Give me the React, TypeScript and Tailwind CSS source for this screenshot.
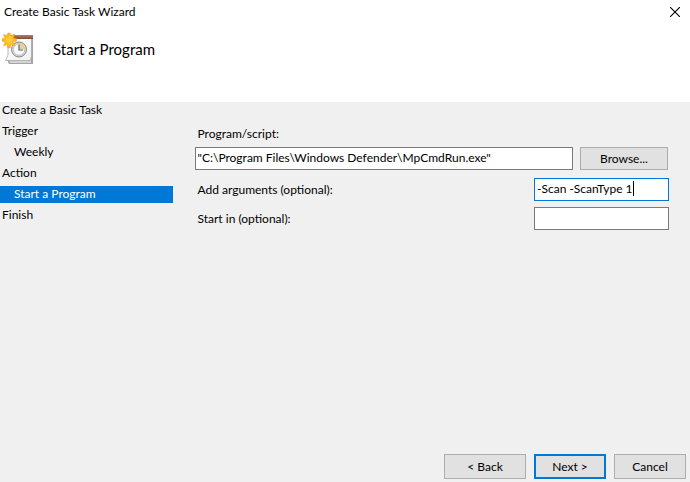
import React, { useState } from 'react'
import { clsx } from 'clsx'

interface IStep {
    id: string
    title: string
    nested?: boolean
}

interface IWizardButtonProps {
    text: string
    className?: string
    primary?: boolean
}

interface ITextFieldProps {
    id: string
    value: string
    onChange: (value: string) => void
    active?: boolean
}

const steps: IStep[] = [
    { id: 'create', title: 'Create a Basic Task' },
    { id: 'trigger', title: 'Trigger' },
    { id: 'weekly', title: 'Weekly', nested: true },
    { id: 'action', title: 'Action' },
    { id: 'start-program', title: 'Start a Program', nested: true },
    { id: 'finish', title: 'Finish' },
]

const App = () => {
    const [program, setProgram] = useState<string>('"C:\\Program Files\\Windows Defender\\MpCmdRun.exe"')
    const [programArguments, setProgramArguments] = useState<string>('-Scan -ScanType 1')
    const [startIn, setStartIn] = useState<string>('')
    const [edited, setEdited] = useState<boolean>(false)

    return (
        <div className="flex min-h-screen flex-col bg-[#f0f0f0] font-['Segoe_UI',Lato,sans-serif] text-xs text-black">
            {/* Title bar and page heading */}
            <header className="h-[102px] bg-white">
                <div className="flex h-6 items-center justify-between pl-1 pr-[10px]">
                    <span>Create Basic Task Wizard</span>
                    <button type="button" aria-label="Close">
                        <CloseIcon />
                    </button>
                </div>
                <div className="flex items-center gap-[18px] pl-[2px] pt-2">
                    <TaskIcon />
                    <h1 className="text-[15px] leading-5">Start a Program</h1>
                </div>
            </header>

            <main className="flex flex-1">
                {/* Steps */}
                <nav className="w-1/4" aria-label="Steps">
                    <ul className="flex flex-col gap-1">
                        {steps.map((step) => (
                            <li
                                key={step.id}
                                aria-current={step.id === 'start-program' ? 'step' : undefined}
                                className={clsx(
                                    'h-[17px] whitespace-nowrap leading-4',
                                    step.nested ? 'pl-[14px]' : 'pl-[2px]',
                                    step.id === 'start-program' && 'bg-[#0078d7] text-white'
                                )}
                            >
                                {step.title}
                            </li>
                        ))}
                    </ul>
                </nav>

                {/* Form */}
                <form className="flex flex-1 flex-col pl-[22px] pr-[21px] pt-6">
                    <label htmlFor="program" className="pl-[3px] leading-4">
                        Program/script:
                    </label>
                    <div className="flex items-center gap-[7px] pr-px pt-[5px]">
                        <div className="flex-1">
                            <TextField id="program" value={program} onChange={setProgram} />
                        </div>
                        <WizardButton text="Browse..." className="h-[23px] w-[88px]" />
                    </div>

                    <div className="flex items-center justify-between pt-2">
                        <label htmlFor="arguments" className="pl-[3px]">
                            Add arguments (optional):
                        </label>
                        <div className="relative w-[135px]">
                            <TextField
                                id="arguments"
                                value={programArguments}
                                onChange={(value) => {
                                    setProgramArguments(value)
                                    setEdited(true)
                                }}
                                active
                            />
                            {/* Text cursor, until the field is edited */}
                            {!edited && <span className="pointer-events-none absolute left-[99px] top-[3px] h-[15px] w-px bg-black" />}
                        </div>
                    </div>

                    <div className="flex items-center justify-between pt-[6px]">
                        <label htmlFor="start-in" className="pl-[3px]">
                            Start in (optional):
                        </label>
                        <div className="w-[135px]">
                            <TextField id="start-in" value={startIn} onChange={setStartIn} />
                        </div>
                    </div>
                </form>
            </main>

            <footer className="flex justify-end gap-2 pb-[3px] pr-1">
                <WizardButton text="< Back" className="h-[25px] w-[82px]" />
                <WizardButton text="Next >" className="h-[25px] w-[72px]" primary />
                <WizardButton text="Cancel" className="h-[25px] w-[72px]" />
            </footer>
        </div>
    )
}

const TextField = ({ id, value, onChange, active }: ITextFieldProps) => {
    return (
        <input
            id={id}
            type="text"
            value={value}
            onChange={(e) => onChange(e.target.value)}
            className={clsx(
                'block h-[23px] w-full border bg-white px-[2px] pb-[2px] outline-none focus:border-[#0078d7]',
                active ? 'border-[#0078d7]' : 'border-[#7a7a7a]'
            )}
        />
    )
}

const WizardButton = ({ text, className, primary }: IWizardButtonProps) => {
    return (
        <button
            type="button"
            className={clsx(
                'flex items-center justify-center bg-[#e1e1e1] hover:bg-[#e5f1fb]',
                primary ? 'border-2 border-[#0078d7]' : 'border border-[#adadad]',
                className
            )}
        >
            {text}
        </button>
    )
}

const CloseIcon = () => {
    return (
        <svg width="10" height="10" viewBox="0 0 10 10" fill="none" stroke="#000" aria-hidden="true">
            <path d="M0 0L10 10M10 0L0 10" strokeWidth="1.1" />
        </svg>
    )
}

// Calendar page with a clock and a "new" star
const TaskIcon = () => {
    return (
        <svg width="33" height="34" viewBox="0 0 33 34" aria-hidden="true">
            <defs>
                <linearGradient id="page" x1="0" y1="0" x2="1" y2="1">
                    <stop offset="0" stopColor="#fff" />
                    <stop offset="1" stopColor="#f1f1f1" />
                </linearGradient>
                <linearGradient id="binding" x1="0" y1="0" x2="0" y2="1">
                    <stop offset="0" stopColor="#b17f70" />
                    <stop offset="1" stopColor="#82483a" />
                </linearGradient>
                <radialGradient id="star">
                    <stop offset="0" stopColor="#ffd83a" />
                    <stop offset="1" stopColor="#fba918" />
                </radialGradient>
            </defs>
            <path d="M6 6H31V32H7L6 30Z" fill="#a5a5a5" />
            <path d="M7 28H29V31H8Z" fill="#d4d4d4" />
            <path d="M6 6H29.500V24L28.500 28.500H3.500L6 23Z" fill="url(#page)" stroke="#a8a8a8" strokeWidth=".8" />
            <path d="M7 3H31V7H7Z" fill="url(#binding)" />
            <circle cx="17" cy="17.500" r="7.500" fill="#dedede" stroke="#858585" />
            <circle cx="17" cy="17.500" r="5.800" fill="#f5f8fb" stroke="#aaa" strokeWidth=".7" />
            <path d="M17 17.500V11.500A6 6 0 0 1 23 17.500Z" fill="#f1cf83" />
            <path d="M17 12.500V18H21" fill="none" stroke="#496b8b" strokeWidth="1.200" />
            <path
                d="M5.800 1H8.200L8.800 3.600L12.500 2L11.400 6L14.500 6.800V9.200L11.400 10L13 13.800L9 12.400L8.200 16H5.800L5 12.400L1.500 14L2.800 10L0 9.200V6.800L2.800 6L1.200 2.500L5 3.600Z"
                fill="url(#star)"
                stroke="#fba11c"
                strokeWidth=".4"
            />
        </svg>
    )
}

export default App
